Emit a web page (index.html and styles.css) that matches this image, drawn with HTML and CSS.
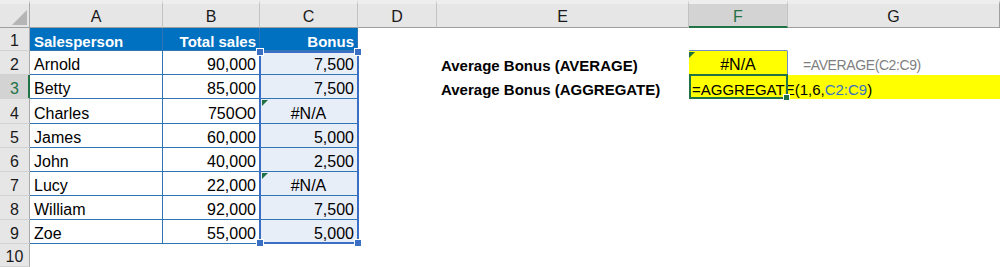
FILE: index.html
```html
<!DOCTYPE html>
<html lang="en">
<head>
<meta charset="utf-8">
<title>Sheet</title>
<link rel="stylesheet" href="styles.css">
</head>
<body>
<div class="sheet">
  <div class="corner"><span class="tri"></span></div>
  <div class="ch">A</div>
  <div class="ch">B</div>
  <div class="ch">C</div>
  <div class="ch">D</div>
  <div class="ch">E</div>
  <div class="ch on">F</div>
  <div class="ch last">G</div>

  <div class="rh">1</div>
  <div class="c th">Salesperson</div>
  <div class="c th r">Total sales</div>
  <div class="c th r">Bonus</div>
  <div class="c"></div>
  <div class="c"></div>
  <div class="c f1"></div>
  <div class="c"></div>

  <div class="rh">2</div>
  <div class="c tb">Arnold</div>
  <div class="c tb r">90,000</div>
  <div class="c tb sel r">7,500</div>
  <div class="c"></div>
  <div class="c lbl">Average Bonus (AVERAGE)</div>
  <div class="c yel ctr err f2">#N/A</div>
  <div class="c note">=AVERAGE(C2:C9)</div>

  <div class="rh on">3</div>
  <div class="c tb">Betty</div>
  <div class="c tb r">85,000</div>
  <div class="c tb sel r">7,500</div>
  <div class="c"></div>
  <div class="c lbl">Average Bonus (AGGREGATE)</div>
  <div class="c edit">=AGGREGATE(1,6,<span class="ref">C2:C9</span>)<span class="active"><span class="fill"></span></span></div>

  <div class="rh">4</div>
  <div class="c tb">Charles</div>
  <div class="c tb r">750O0</div>
  <div class="c tb sel ctr err">#N/A</div>
  <div class="c"></div>
  <div class="c"></div>
  <div class="c"></div>
  <div class="c"></div>

  <div class="rh">5</div>
  <div class="c tb">James</div>
  <div class="c tb r">60,000</div>
  <div class="c tb sel r">5,000</div>
  <div class="c"></div>
  <div class="c"></div>
  <div class="c"></div>
  <div class="c"></div>

  <div class="rh">6</div>
  <div class="c tb">John</div>
  <div class="c tb r">40,000</div>
  <div class="c tb sel r">2,500</div>
  <div class="c"></div>
  <div class="c"></div>
  <div class="c"></div>
  <div class="c"></div>

  <div class="rh">7</div>
  <div class="c tb">Lucy</div>
  <div class="c tb r">22,000</div>
  <div class="c tb sel ctr err">#N/A</div>
  <div class="c"></div>
  <div class="c"></div>
  <div class="c"></div>
  <div class="c"></div>

  <div class="rh">8</div>
  <div class="c tb">William</div>
  <div class="c tb r">92,000</div>
  <div class="c tb sel r">7,500</div>
  <div class="c"></div>
  <div class="c"></div>
  <div class="c"></div>
  <div class="c"></div>

  <div class="rh">9</div>
  <div class="c tb">Zoe</div>
  <div class="c tb r">55,000</div>
  <div class="c tb sel r">5,000</div>
  <div class="c"></div>
  <div class="c"></div>
  <div class="c"></div>
  <div class="c"></div>

  <div class="rh">10</div>
  <div class="c"></div>
  <div class="c"></div>
  <div class="c"></div>
  <div class="c"></div>
  <div class="c"></div>
  <div class="c"></div>
  <div class="c"></div>

  <div class="rng">
    <span class="h tl"></span><span class="h tr"></span><span class="h bl"></span><span class="h br"></span>
  </div>
</div>
</body>
</html>
```

FILE: styles.css
```css
html, body {
  margin: 0;
  padding: 0;
  background: #ffffff;
}

body {
  font-family: "Liberation Sans", Arial, sans-serif;
  font-size: 16px;
  color: #000000;
}

.sheet {
  position: relative;
  display: grid;
  grid-template-columns: 30px 133px 97px 98px 79px 252px 99px 212px;
  grid-template-rows: 28px 23px 24px 24px 25px 24px 24px 24px 24px 24px 23px;
  width: 1000px;
  height: 267px;
  overflow: hidden;
}

.corner,
.ch,
.rh,
.c {
  box-sizing: border-box;
  display: flex;
  align-items: flex-end;
  white-space: nowrap;
  min-width: 0;
}

/* column headers */
.corner,
.ch {
  background: #e6e6e6;
  border-top: 4px solid #eeeeee;
  border-right: 1px solid #c3c3c3;
  border-bottom: 1px solid #9f9f9f;
  justify-content: center;
  padding-bottom: 1px;
  color: #1a1a1a;
}

.corner {
  justify-content: flex-end;
  padding: 0 2px 2px 0;
  border-right-color: #ababab;
}

.tri {
  display: block;
  width: 15px;
  height: 15px;
  background: #b5b5b5;
  clip-path: polygon(100% 0, 100% 100%, 0 100%);
}

.ch.on {
  background: #d3d3d3;
  color: #217346;
  border-bottom: 2px solid #217346;
  padding-bottom: 0;
}

.ch.last {
  border-right-color: #9f9f9f;
}

/* row headers */
.rh {
  background: #e6e6e6;
  border-right: 1px solid #ababab;
  border-bottom: 1px solid #d2d2d2;
  justify-content: center;
  color: #1a1a1a;
}

.rh.on {
  background: #d3d3d3;
  color: #217346;
  border-right-color: #217346;
  box-shadow: inset -1px 0 0 #217346;
}

/* cells */
.c {
  border-right: 1px solid transparent;
  border-bottom: 1px solid transparent;
  padding: 0 4px;
}

.th {
  background: #0070c0;
  color: #ffffff;
  font-weight: bold;
  font-size: 15px;
  border-right-color: #2f75b5;
  border-bottom-color: #2f75b5;
}

.tb {
  border-right-color: #2f75b5;
  border-bottom-color: #2f75b5;
}

.r {
  justify-content: flex-end;
  padding-right: 3px;
}

.ctr {
  justify-content: center;
}

.sel {
  background: #e8eef8;
}

.err {
  position: relative;
}

.err::before {
  content: "";
  position: absolute;
  left: 2px;
  top: 1px;
  border-top: 6px solid #1e7145;
  border-right: 6px solid transparent;
}

.lbl {
  font-weight: bold;
  font-size: 15px;
}

.yel {
  background: #ffff00;
}

.f1 {
  border-bottom-color: #6f8fc6;
}

.f2 {
  border-right-color: #6f8fc6;
}

.f2::before {
  left: 0;
}

.note {
  color: #7f7f7f;
  font-size: 14px;
  letter-spacing: -0.4px;
  padding-left: 15px;
  padding-bottom: 1px;
}

.edit {
  grid-column: span 2;
  position: relative;
  background: #ffff00;
  font-size: 15px;
  padding-left: 3px;
}

.ref {
  color: #3a6fc4;
}

.active {
  position: absolute;
  left: 0;
  top: -1px;
  width: 99px;
  height: 25px;
  box-sizing: border-box;
  border: 2px solid #217346;
}

.fill {
  position: absolute;
  right: -4px;
  bottom: -4px;
  width: 5px;
  height: 5px;
  background: #217346;
  border: 1px solid #ffffff;
}

/* referenced range C2:C9 */
.rng {
  position: absolute;
  left: 259px;
  top: 51px;
  width: 100px;
  height: 193px;
  box-sizing: border-box;
  border: 2px solid #3a6fc4;
  pointer-events: none;
}

.h {
  position: absolute;
  width: 6px;
  height: 6px;
  background: #3a6fc4;
  border: 1px solid #ffffff;
}

.tl { left: -5px; top: -5px; }
.tr { right: -5px; top: -5px; }
.bl { left: -5px; bottom: -5px; }
.br { right: -5px; bottom: -5px; }
```
